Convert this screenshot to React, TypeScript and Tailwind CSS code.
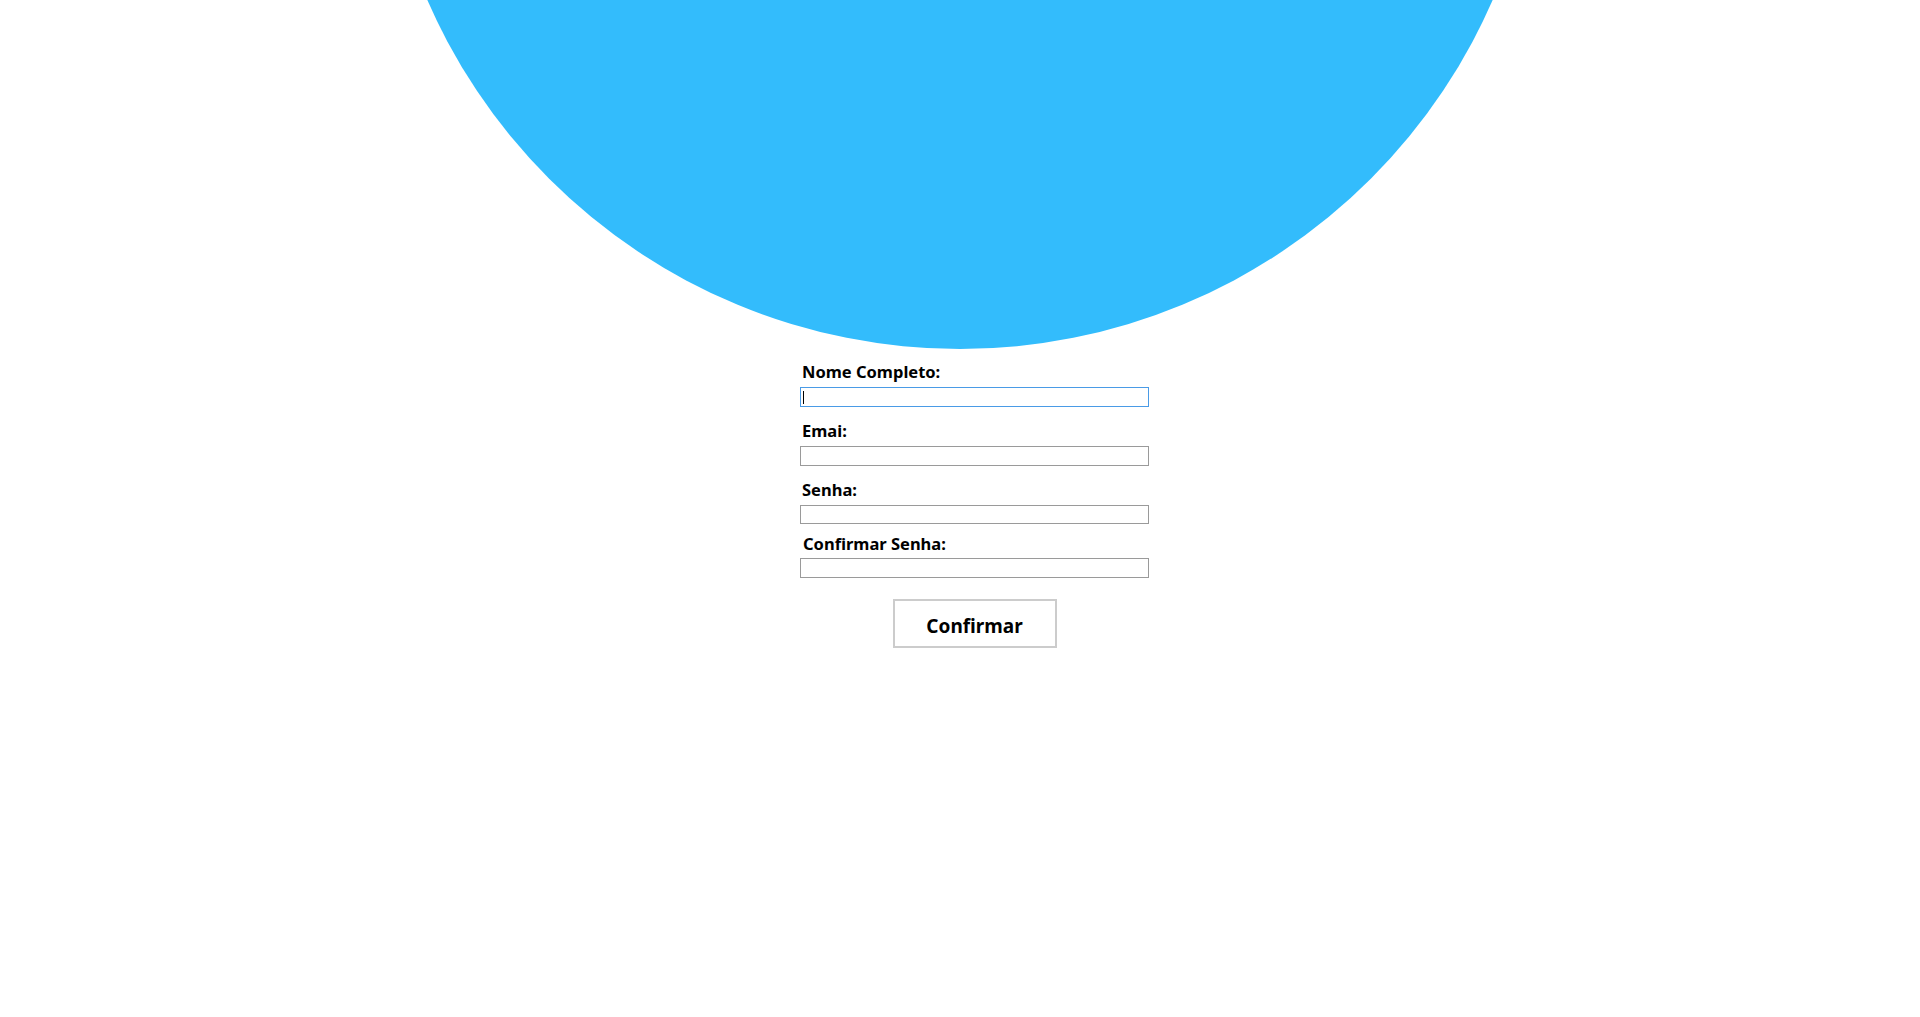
import React from "react";

export default function App() {
  const font = { fontFamily: '"Noto Sans", "Open Sans", sans-serif' };
  return (
    <div className="relative min-h-[1017px] w-full overflow-hidden bg-white" style={font}>
      <div className="absolute left-1/2 top-[-849px] h-[1198px] w-[1162px] -translate-x-1/2 rounded-full bg-[#33bcfc]" />
      <div className="relative flex justify-center pl-[29px] pt-[362px]">
        <form className="flex w-[349px] flex-col" onSubmit={(e) => e.preventDefault()}>
          <label className="pl-[2px] text-[16.5px] font-bold leading-[20px] text-black">Nome Completo:</label>
          <div className="relative mt-[5px] h-[20px] w-full border border-[#4a9be6] bg-white">
            <span className="absolute left-[2px] top-[3px] h-[13px] w-px bg-black" />
          </div>
          <label className="mt-[14px] pl-[2px] text-[16.5px] font-bold leading-[20px] text-black">Emai:</label>
          <div className="mt-[5px] h-[20px] w-full border border-[#9a9a9a] bg-white" />
          <label className="mt-[14px] pl-[2px] text-[16.5px] font-bold leading-[20px] text-black">Senha:</label>
          <div className="mt-[5px] h-[19px] w-full border border-[#9a9a9a] bg-white" />
          <label className="mt-[10px] pl-[3px] text-[16.5px] font-bold leading-[20px] text-black">Confirmar Senha:</label>
          <div className="mt-[4px] h-[20px] w-full border border-[#9a9a9a] bg-white" />
          <div className="mt-[21px] flex justify-center">
            <button
              type="submit"
              className="flex h-[49px] w-[164px] items-center justify-center border-2 border-[#cccccc] bg-white pt-[5px] text-[19px] font-bold text-black"
            >
              Confirmar
            </button>
          </div>
        </form>
      </div>
    </div>
  );
}
